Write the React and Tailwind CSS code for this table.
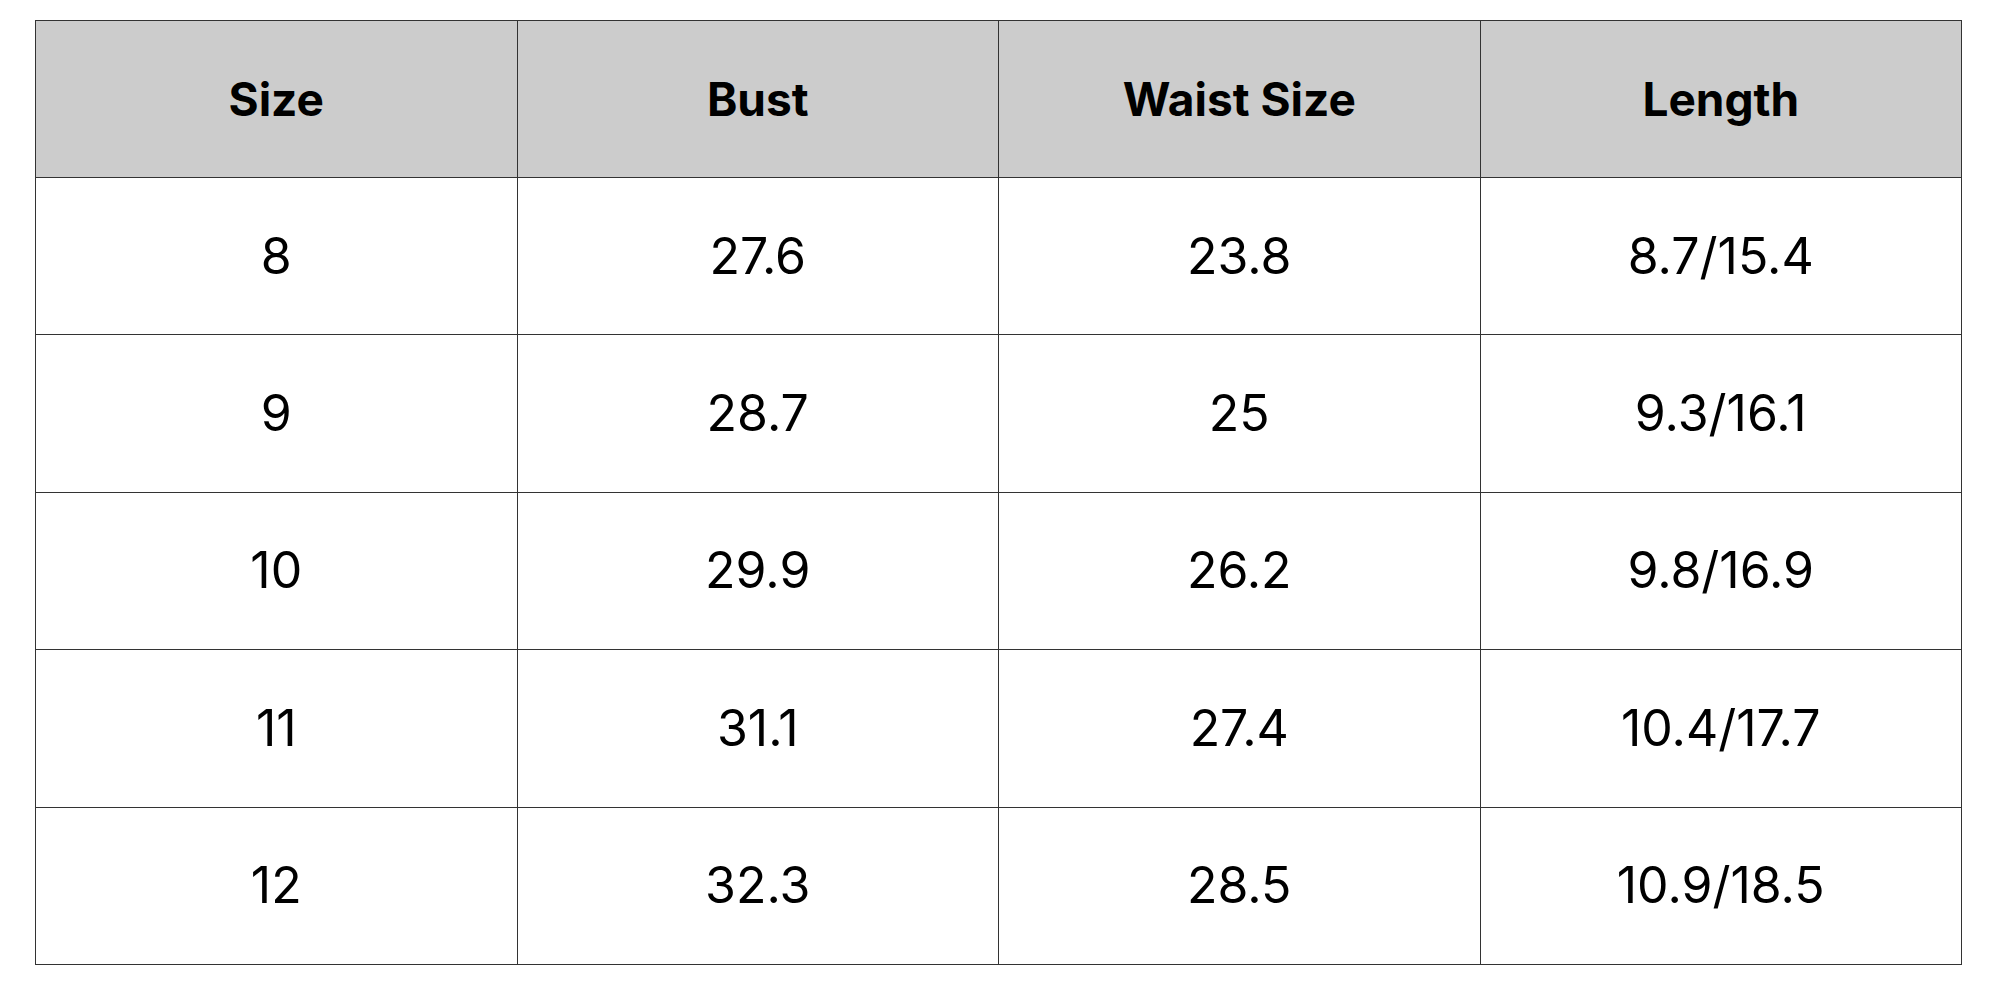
import React from "react";

const rows = [
  ["8", "27.6", "23.8", "8.7/15.4"],
  ["9", "28.7", "25", "9.3/16.1"],
  ["10", "29.9", "26.2", "9.8/16.9"],
  ["11", "31.1", "27.4", "10.4/17.7"],
  ["12", "32.3", "28.5", "10.9/18.5"],
];

const headers = ["Size", "Bust", "Waist Size", "Length"];

export default function App() {
  return (
    <div className="w-[2000px] h-[1000px] bg-white pt-[20px] pl-[35px] font-['Inter',sans-serif] text-black">
      <table className="w-[1927px] h-[945px] border-collapse table-fixed">
        <thead>
          <tr className="h-[157px] bg-[#cccccc]">
            {headers.map((h) => (
              <th key={h} className="border border-[#333333] text-[46px] font-bold text-center align-middle">
                {h}
              </th>
            ))}
          </tr>
        </thead>
        <tbody>
          {rows.map((r, i) => (
            <tr key={i} className="h-[157px]">
              {r.map((c, j) => (
                <td key={j} className="border border-[#333333] text-[50px] text-center align-middle">
                  {c}
                </td>
              ))}
            </tr>
          ))}
        </tbody>
      </table>
    </div>
  );
}
